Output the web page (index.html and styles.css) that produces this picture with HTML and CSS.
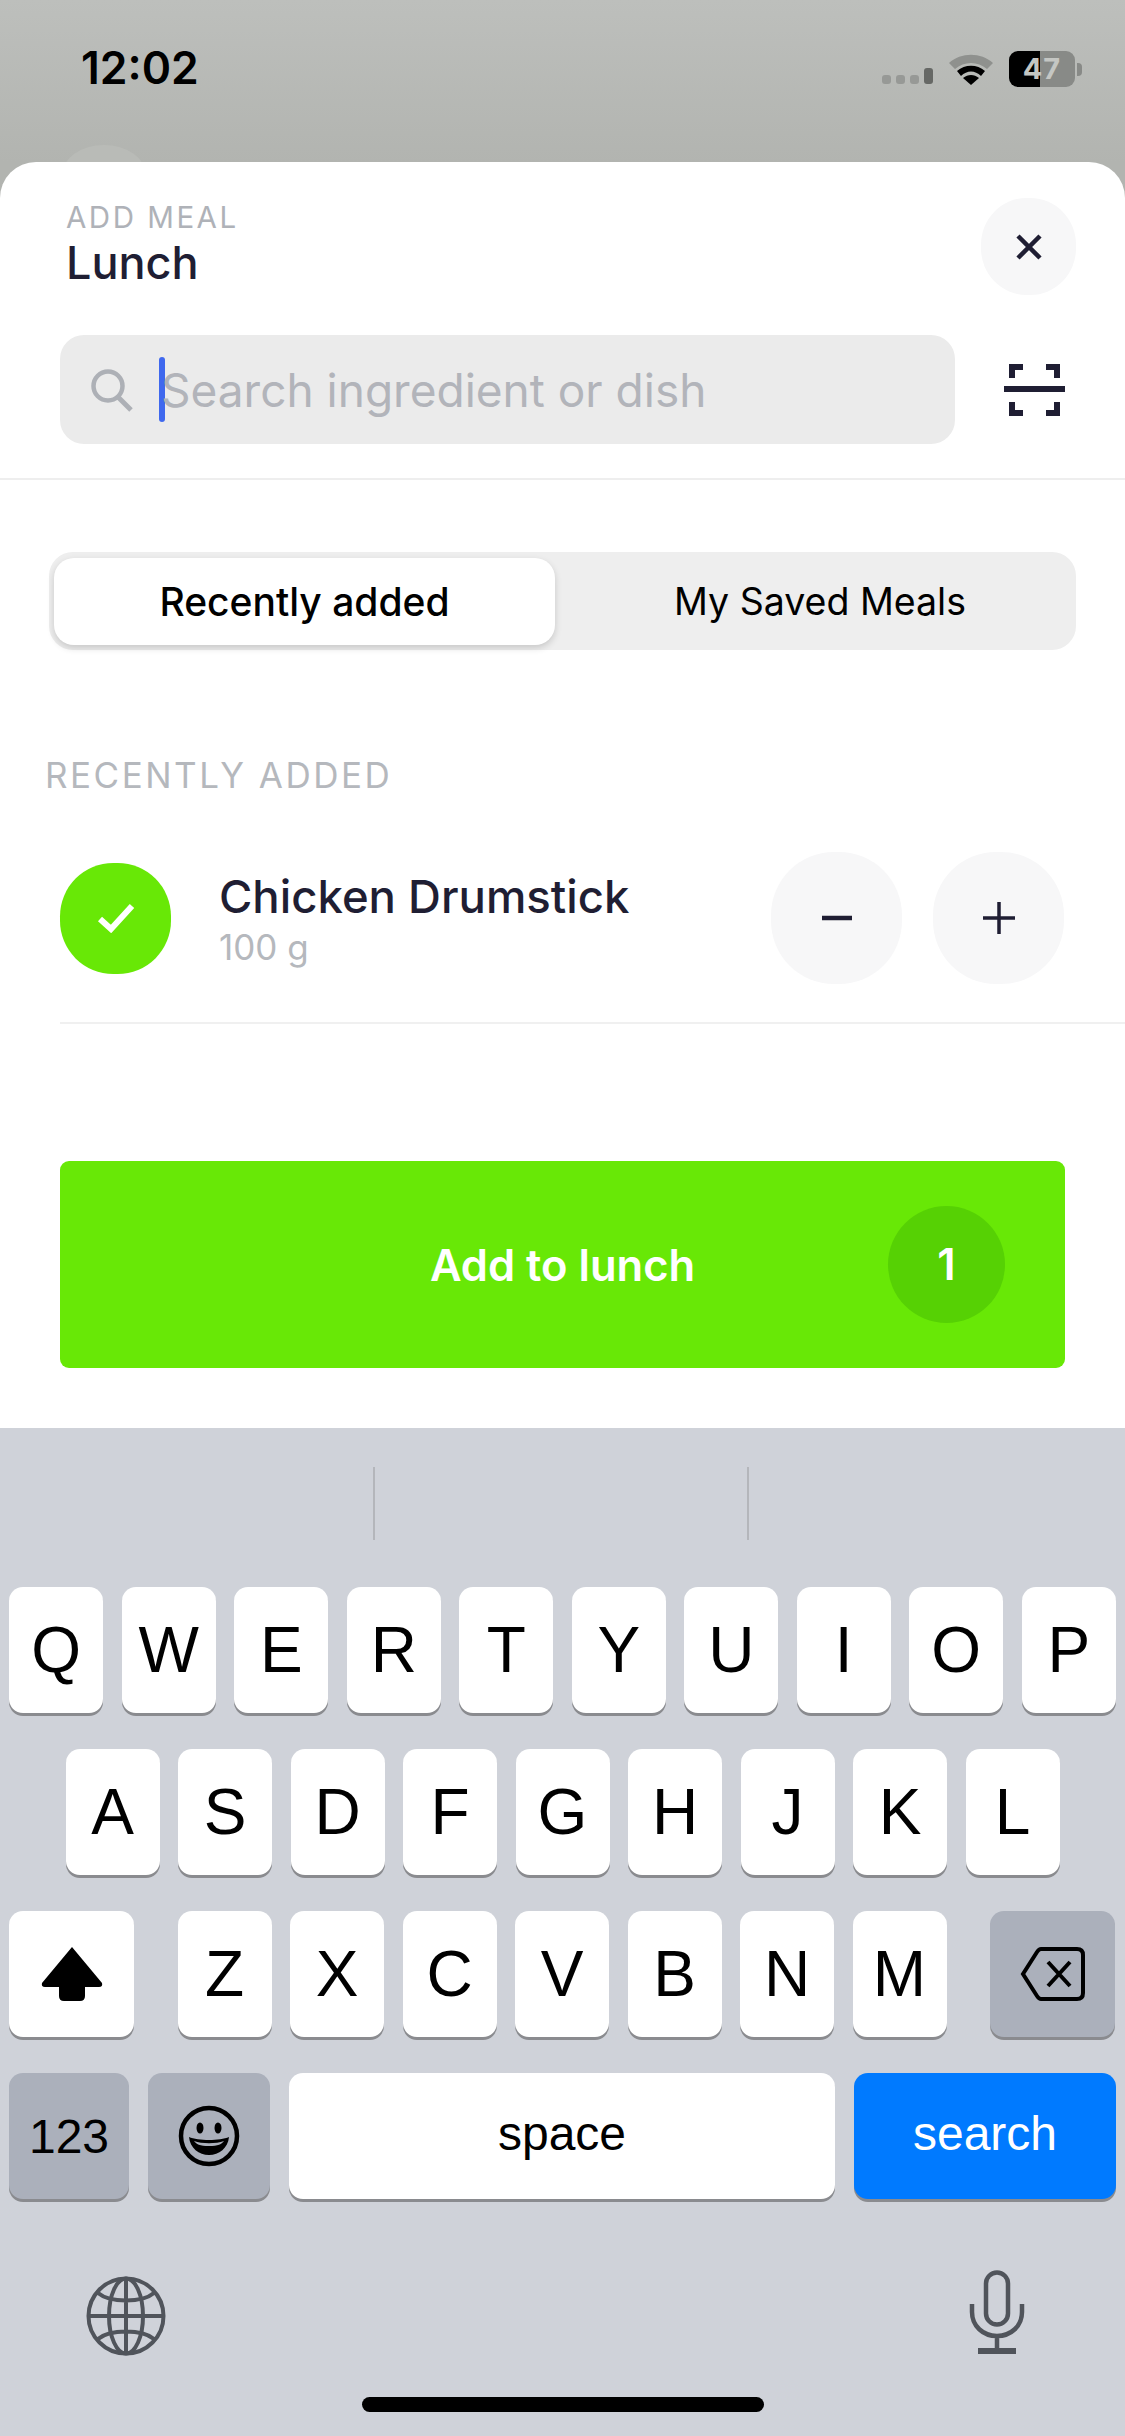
FILE: index.html
```html
<!DOCTYPE html>
<html lang="en">
<head>
  <meta charset="UTF-8">
  <meta name="viewport" content="width=device-width, initial-scale=1.0">
  <title>Add Meal</title>
  <link rel="stylesheet" href="styles.css">
</head>
<body>

  <div class="status-bar">
    <span class="time">12:02</span>
    <div class="status-icons">
      <div class="signal">
        <span></span><span></span><span></span><span class="signal-on"></span>
      </div>
      <svg class="wifi" width="46" height="34" viewBox="0 0 46 34">
        <path d="M1 12 C13 1 33 1 45 12 L39 18 C30 10 16 10 7 18 Z" fill="#8f918e"/>
        <path d="M9 20 C17 13 29 13 37 20 L33 25 C27 19 19 19 13 25 Z" fill="#000"/>
        <path d="M15 27 C20 23 26 23 31 27 L23 34 Z" fill="#000"/>
      </svg>
      <div class="battery">
        <div class="battery-body"><span>47</span></div>
        <div class="battery-nub"></div>
      </div>
    </div>
    <div class="behind-blob"></div>
  </div>

  <div class="sheet">
    <div class="sheet-head">
      <div>
        <div class="eyebrow">ADD MEAL</div>
        <h1>Lunch</h1>
      </div>
      <button class="round-btn close-btn">
        <svg width="26" height="26" viewBox="0 0 26 26">
          <path d="M2 2 L24 24 M24 2 L2 24" stroke="#1f1e33" stroke-width="4.5" fill="none"/>
        </svg>
      </button>
    </div>

    <div class="search-row">
      <div class="search-box">
        <svg class="search-icon" width="44" height="44" viewBox="0 0 44 44">
          <circle cx="18" cy="18" r="14.5" stroke="#adb0b6" stroke-width="4.5" fill="none"/>
          <path d="M28 29 L41 42" stroke="#adb0b6" stroke-width="5" fill="none"/>
        </svg>
        <span class="caret"></span>
        <span class="placeholder">Search ingredient or dish</span>
      </div>
      <svg class="scan-icon" width="61" height="52" viewBox="0 0 61 52">
        <path d="M8 14 V3 H19 M42 3 H53 V14 M8 38 V49 H19 M42 49 H53 V38" stroke="#1f1e33" stroke-width="6" fill="none"/>
        <path d="M0 25 H61" stroke="#1f1e33" stroke-width="6" fill="none"/>
      </svg>
    </div>

    <div class="tabs">
      <div class="tab tab-active">Recently added</div>
      <div class="tab tab-other">My Saved Meals</div>
    </div>

    <div class="section-label">RECENTLY ADDED</div>

    <div class="meal-row">
      <div class="check">
        <svg width="38" height="30" viewBox="0 0 38 30">
          <path d="M3 16 L14 26 L35 3" stroke="#fff" stroke-width="6" fill="none"/>
        </svg>
      </div>
      <div class="meal-info">
        <div class="meal-name">Chicken Drumstick</div>
        <div class="meal-amount">100 g</div>
      </div>
      <div class="stepper">
        <button class="round-btn step-btn">
          <svg width="32" height="32" viewBox="0 0 32 32"><path d="M1 16 H31" stroke="#1f1e33" stroke-width="4.5"/></svg>
        </button>
        <button class="round-btn step-btn">
          <svg width="32" height="32" viewBox="0 0 32 32"><path d="M0 16 H32 M16 0 V32" stroke="#1f1e33" stroke-width="3.5"/></svg>
        </button>
      </div>
    </div>

    <button class="add-btn">
      <span>Add to lunch</span>
      <span class="add-count">1</span>
    </button>
  </div>

  <div class="keyboard">
    <div class="suggestions">
      <div></div><div></div><div></div>
    </div>

    <div class="key-row">
      <div class="key">Q</div><div class="key">W</div><div class="key">E</div><div class="key">R</div><div class="key">T</div>
      <div class="key">Y</div><div class="key">U</div><div class="key">I</div><div class="key">O</div><div class="key">P</div>
    </div>
    <div class="key-row">
      <div class="key">A</div><div class="key">S</div><div class="key">D</div><div class="key">F</div><div class="key">G</div>
      <div class="key">H</div><div class="key">J</div><div class="key">K</div><div class="key">L</div>
    </div>
    <div class="key-row key-row-split">
      <div class="key key-wide">
        <svg width="64" height="56" viewBox="0 0 64 56">
          <path d="M32 1 L62 37 Q63 41 59 41 H45 V50 Q45 55 40 55 H24 Q19 55 19 50 V41 H5 Q1 41 2 37 Z" fill="#000"/>
        </svg>
      </div>
      <div class="key-group">
        <div class="key">Z</div><div class="key">X</div><div class="key">C</div><div class="key">V</div>
        <div class="key">B</div><div class="key">N</div><div class="key">M</div>
      </div>
      <div class="key key-wide key-dark">
        <svg width="66" height="56" viewBox="0 0 66 56">
          <path d="M21 3 H57 Q63 3 63 9 V47 Q63 53 57 53 H21 Q19 53 17 50 L3 28 L17 6 Q19 3 21 3 Z" stroke="#000" stroke-width="4" fill="none"/>
          <path d="M28 16 L50 40 M50 16 L28 40" stroke="#000" stroke-width="4" fill="none"/>
        </svg>
      </div>
    </div>
    <div class="key-row key-row-bottom">
      <div class="key key-dark key-num">123</div>
      <div class="key key-dark key-emoji">
        <svg width="62" height="62" viewBox="0 0 62 62">
          <circle cx="31" cy="31" r="28" stroke="#000" stroke-width="4.5" fill="none"/>
          <ellipse cx="22" cy="23" rx="3.5" ry="5.5" fill="#000"/>
          <ellipse cx="40" cy="23" rx="3.5" ry="5.5" fill="#000"/>
          <path d="M11 32 C20 36 42 36 51 32 C50 43 41 50 31 50 C21 50 12 43 11 32 Z" fill="#000"/>
          <path d="M16 36 C24 39 38 39 46 36 C44 39 40 41 31 41 C22 41 18 39 16 36 Z" fill="#abb0bb"/>
        </svg>
      </div>
      <div class="key key-space"><span>space</span></div>
      <div class="key key-search"><span>search</span></div>
    </div>

    <div class="keyboard-foot">
      <svg class="globe" width="80" height="80" viewBox="0 0 80 80" fill="none" stroke="#50545b" stroke-width="4">
        <circle cx="40" cy="40" r="37.5"/>
        <ellipse cx="40" cy="40" rx="17" ry="37.5"/>
        <path d="M40 2 V78 M2 40 H78 M12 17 C24 27 56 27 68 17 M12 63 C24 53 56 53 68 63"/>
      </svg>
      <svg width="56" height="84" viewBox="0 0 56 84" fill="none" stroke="#50545b" stroke-width="4.5">
        <rect x="17" y="2.5" width="22" height="52" rx="11"/>
        <path d="M3 34 V42 C3 56 14 66 28 66 C42 66 53 56 53 42 V34 M28 66 V80"/>
        <path d="M9 81 H47" stroke-width="6"/>
      </svg>
    </div>

    <div class="home-bar"></div>
  </div>

</body>
</html>
```

FILE: styles.css
```css
* {
  margin: 0;
  padding: 0;
  box-sizing: border-box;
}

body {
  width: 1125px;
  height: 2436px;
  overflow: hidden;
  font-family: 'Inter', sans-serif;
  background-color: #b2b4b0;
  color: #1f1e33;
}

button {
  border: none;
  font-family: inherit;
}

/* status bar */

.status-bar {
  position: relative;
  height: 162px;
  padding: 44px 43px 0 81px;
  display: flex;
  justify-content: space-between;
  align-items: flex-start;
  background: linear-gradient(#bdbfbc, #b2b4b0);
}

.time {
  font-size: 44.5px;
  font-weight: 600;
  line-height: 48px;
  color: #000;
}

.status-icons {
  display: flex;
  align-items: flex-start;
  margin-top: 7px;
}

.signal {
  display: flex;
  align-items: flex-end;
  gap: 5px;
  height: 33px;
  margin-right: 15px;
}

.signal span {
  width: 9px;
  height: 9px;
  border-radius: 3px;
  background-color: #979996;
}

.signal .signal-on {
  height: 16px;
  background-color: #666865;
}

.wifi {
  margin-right: 15px;
}

.battery {
  display: flex;
  align-items: center;
}

.battery-body {
  width: 66px;
  height: 36px;
  border-radius: 9px;
  background: linear-gradient(90deg, #000 47%, #888a87 47%);
  text-align: center;
}

.battery-body span {
  font-size: 29px;
  font-weight: 700;
  line-height: 36px;
  letter-spacing: 1px;
  color: #c4c6c3;
}

.battery-nub {
  width: 5px;
  height: 13px;
  margin-left: 2px;
  border-radius: 0 4px 4px 0;
  background-color: #888a87;
}

.behind-blob {
  position: absolute;
  left: 62px;
  top: 145px;
  width: 84px;
  height: 60px;
  border-radius: 50%;
  background-color: #b9bbb7;
}

/* sheet */

.sheet {
  position: relative;
  height: 1266px;
  background-color: #fff;
  border-radius: 36px 36px 0 0;
}

.sheet-head {
  display: flex;
  justify-content: space-between;
  padding: 36px 49px 0 66px;
  height: 173px;
}

.eyebrow {
  margin-top: 1px;
  font-size: 29.5px;
  line-height: 36px;
  letter-spacing: 2.5px;
  color: #afb2b8;
}

h1 {
  margin-top: 3px;
  font-size: 45px;
  font-weight: 500;
  line-height: 50px;
}

.round-btn {
  display: flex;
  align-items: center;
  justify-content: center;
  border-radius: 48%;
  background-color: #f7f7f8;
}

.close-btn {
  width: 95px;
  height: 97px;
}

.search-row {
  display: flex;
  align-items: center;
  padding: 0 60px 34px;
  border-bottom: 2px solid #eeeeee;
}

.search-box {
  display: flex;
  align-items: center;
  width: 895px;
  height: 109px;
  padding-left: 30px;
  border-radius: 24px;
  background-color: #ebebeb;
}

.search-icon {
  flex-shrink: 0;
}

.caret {
  width: 6px;
  height: 65px;
  margin-left: 25px;
  border-radius: 3px;
  background-color: #3f68ee;
}

.placeholder {
  margin-left: -4px;
  font-size: 46px;
  color: #b2b4ba;
}

.scan-icon {
  margin-left: 49px;
}

.tabs {
  display: flex;
  width: 1027px;
  height: 98px;
  margin: 72px 0 0 49px;
  padding: 6px 5px 5px;
  border-radius: 24px;
  background-color: #eeeeee;
}

.tab {
  display: flex;
  align-items: center;
  justify-content: center;
  flex: 1;
  font-size: 37.5px;
  font-weight: 400;
  color: #000;
}

.tab-other {
  padding-left: 14px;
}

.tab-active {
  flex: none;
  width: 501px;
  border-radius: 20px;
  background-color: #fff;
  box-shadow: 0 3px 7px rgba(0, 0, 0, 0.16);
  font-size: 39px;
  font-weight: 500;
}

.section-label {
  margin: 106px 0 0 45px;
  font-size: 35px;
  line-height: 38px;
  letter-spacing: 2.5px;
  color: #b5b8bd;
}

.meal-row {
  display: flex;
  align-items: center;
  height: 176px;
  margin: 54px 0 0 60px;
  padding: 8px 61px 42px 0;
  border-bottom: 2px solid #f0f0f0;
}

.check {
  display: flex;
  align-items: center;
  justify-content: center;
  width: 111px;
  height: 111px;
  border-radius: 48%;
  background-color: #68e806;
}

.meal-info {
  flex: 1;
  margin: 6px 0 0 48px;
}

.meal-name {
  font-size: 45.5px;
  font-weight: 500;
  line-height: 52px;
}

.meal-amount {
  font-size: 35px;
  line-height: 48px;
  color: #b5b8bd;
}

.stepper {
  display: flex;
  gap: 31px;
}

.step-btn {
  width: 131px;
  height: 132px;
}

.add-btn {
  display: flex;
  align-items: center;
  justify-content: center;
  position: relative;
  width: 1005px;
  height: 207px;
  margin: 137px 0 0 60px;
  border-radius: 9px;
  background-color: #68e806;
  color: #fff;
  font-size: 43.5px;
  font-weight: 600;
}

.add-count {
  position: absolute;
  right: 60px;
  top: 45px;
  width: 117px;
  height: 117px;
  border-radius: 50%;
  background-color: #56d104;
  line-height: 117px;
}

/* keyboard */

.keyboard {
  height: 1008px;
  background-color: #cfd2d9;
  font-family: 'Liberation Sans', sans-serif;
  color: #000;
}

.suggestions {
  display: flex;
  height: 159px;
  padding: 39px 3px 47px 0;
}

.suggestions div {
  flex: 1;
  border-right: 2px solid #b4b6bb;
}

.suggestions div:last-child {
  border-right: none;
}

.key-row {
  display: flex;
  justify-content: center;
  gap: 18.5px;
  height: 126px;
  margin-bottom: 36px;
}

.key {
  display: flex;
  align-items: center;
  justify-content: center;
  width: 94px;
  height: 126px;
  border-radius: 14px;
  background-color: #fff;
  box-shadow: 0 3px 0 #8a8b8f;
  font-size: 64px;
}

.key-row-split {
  justify-content: space-between;
  padding: 0 10px 0 9px;
}

.key-group {
  display: flex;
  gap: 18.5px;
}

.key-wide {
  width: 125px;
}

.key-dark {
  background-color: #abb0bb;
}

.key-row-bottom {
  justify-content: flex-start;
  gap: 19px;
  padding-left: 9px;
}

.key-num {
  width: 120px;
  font-size: 48px;
}

.key-emoji {
  width: 122px;
}

.key-space {
  width: 546px;
  font-size: 48px;
}

.key-search {
  width: 262px;
  background-color: #007aff;
  color: #fff;
  font-size: 48px;
}

.key-space span,
.key-search span {
  margin-bottom: 5px;
}

.keyboard-foot {
  display: flex;
  justify-content: space-between;
  align-items: flex-start;
  height: 147px;
  padding: 35px 100px 0 86px;
}

.globe {
  margin-top: 6px;
}

.home-bar {
  width: 402px;
  height: 15px;
  margin: 15px 0 0 362px;
  border-radius: 8px;
  background-color: #000;
}
```
